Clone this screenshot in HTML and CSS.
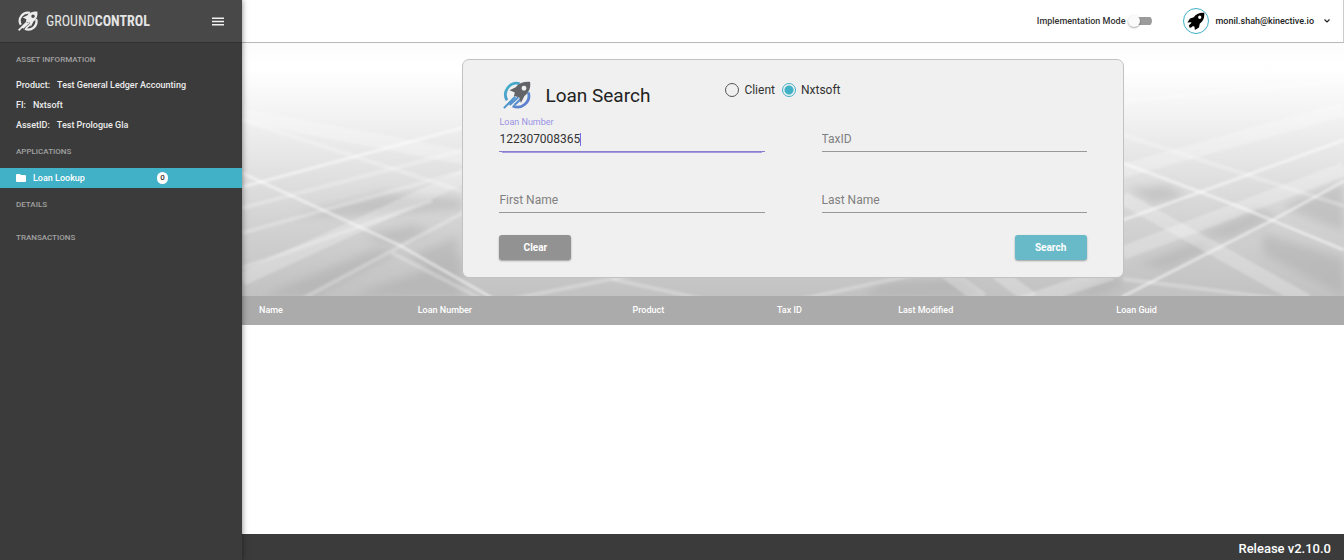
FILE: index.html
```html
<!DOCTYPE html>
<html lang="en">

<head>
    <meta charset="UTF-8">
    <meta name="viewport" content="width=device-width, initial-scale=1.0">
    <title>GroundControl - Loan Search</title>
    <link rel="stylesheet" href="styles.css">
</head>

<body>
    <div class="app">
        <aside class="sidebar">
            <div class="brand">
                <svg class="brandIcon" viewBox="0 0 32 32">
                    <g fill="none" stroke="#ececec" stroke-width="3.600">
                        <path d="M19 3A13 13 0 0 0 4.500 22" />
                        <path d="M29 13A13 13 0 0 1 11 28.500" />
                        <path d="M1 31L14 18M7.500 27.500l10-9M13 27.500l7-6.500" stroke-width="2.800" />
                    </g>
                    <path fill="#ececec" fill-rule="evenodd" d="M31 1C24 .5 18 2.500 14.500 7L7.500 10.500l6 2.500-1 4 6 1.500 2 6.500 4-8C29.500 13 32 8 31 1zM24 5.500a2.800 2.800 0 1 1 0 5.600 2.800 2.800 0 0 1 0-5.600z" />
                </svg>
                <span class="brandName">GROUND<b>CONTROL</b></span>
                <button class="menuBtn" type="button" aria-label="Menu">
                    <svg viewBox="0 0 13 9"><path d="M0 1h13M0 4.500h13M0 8h13" stroke="#f0f0f0" stroke-width="1.800" /></svg>
                </button>
            </div>
            <h2 class="sideTitle">ASSET INFORMATION</h2>
            <dl class="assetInfo">
                <div><dt>Product:</dt><dd>Test General Ledger Accounting</dd></div>
                <div><dt>FI:</dt><dd>Nxtsoft</dd></div>
                <div><dt>AssetID:</dt><dd>Test Prologue Gla</dd></div>
            </dl>
            <h2 class="sideTitle">APPLICATIONS</h2>
            <a class="sideLink" href="#">
                <svg viewBox="0 0 20 16"><path fill="#fff" d="M2 0h6l2 2h8a2 2 0 0 1 2 2v10a2 2 0 0 1-2 2H2a2 2 0 0 1-2-2V2a2 2 0 0 1 2-2z" /></svg>
                <span>Loan Lookup</span>
                <span class="count">0</span>
            </a>
            <h2 class="sideTitle">DETAILS</h2>
            <h2 class="sideTitle">TRANSACTIONS</h2>
        </aside>

        <div class="main">
            <header class="topbar">
                <label class="mode">Implementation Mode<input class="switch" type="checkbox"></label>
                <button class="user" type="button">
                    <span class="avatar">
                        <svg viewBox="0 0 24 24">
                            <path fill="#000" fill-rule="evenodd" d="M23 1C16.500.5 12 2.500 9 7L4 8.500.5 14l5.500-.5-.8 1.800-2.700 2.200.5 2 .5 1.500 2-.5 2.500-2 2 1 .5 4.500 5.500-3.500 1-5C22 12 23.500 7 23 1zM17 4.800a2.200 2.200 0 1 1 0 4.400 2.200 2.200 0 0 1 0-4.400z" />
                        </svg>
                    </span>
                    monil.shah@kinective.io
                    <svg class="chevron" viewBox="0 0 6 4"><path d="M.5.5L3 3 5.500.5" fill="none" stroke="#222" stroke-width="1.200" /></svg>
                </button>
            </header>

            <section class="hero">
                <svg class="heroBg" viewBox="0 0 1102 253" preserveAspectRatio="none">
                    <defs>
                        <linearGradient id="floor" x1="0" y1="0" x2="0" y2="1">
                            <stop offset="0" stop-color="#fcfcfc" />
                            <stop offset=".1" stop-color="#fff" />
                            <stop offset=".25" stop-color="#f5f5f5" />
                            <stop offset=".45" stop-color="#e6e6e6" />
                            <stop offset=".7" stop-color="#d3d3d3" />
                            <stop offset="1" stop-color="#c2c2c2" />
                        </linearGradient>
                        <filter id="soft"><feGaussianBlur stdDeviation="1.200" /></filter>
                        <filter id="softer" x="-10%" y="-10%" width="120%" height="120%"><feGaussianBlur stdDeviation="5" /></filter>
                    </defs>
                    <rect width="1102" height="253" fill="url(#floor)" />
                    <!-- shaded streaks -->
                    <g fill="#a6a6a6" fill-opacity=".4" filter="url(#softer)">
                        <path d="M120 194l50-12 20 6-34 14z" />
                        <path d="M165 214l50-20v22l-26 10z" />
                        <path d="M20 253l115-48 22 4-84 44z" />
                        <path d="M50 174l90-24 80 6v10l-90 6z" />
                        <path d="M110 253l110-40v40z" />
                        <path d="M895 222l60-24 20 6-50 22z" />
                        <path d="M955 192l60-26 22 8-50 22z" />
                        <path d="M885 146l40-4 20 12-34 6z" />
                        <path d="M820 253l50-20 16 8-30 12z" />
                        <path d="M1020 190l82 26v36l-80-40z" />
                        <path d="M1040 164l62-26v50z" />
                        <path d="M640 240l80-6 20 20h-120z" />
                    </g>
                    <!-- light bands -->
                    <g fill="none" stroke="#fff" stroke-opacity=".25" stroke-width="14" filter="url(#soft)">
                        <path d="M881 210L1102 126" />
                        <path d="M881 155L1065 258" />
                        <path d="M705 230L740 256" />
                        <path d="M755 230L790 256" />
                        <path d="M780 260L870 230" />
                        <path d="M0 72L230 116" />
                        <path d="M881 128L1102 66" />
                        <path d="M0 236L230 130" />
                    </g>
                    <g fill="none" stroke="#fff" stroke-opacity=".25" stroke-width="4" filter="url(#soft)">
                        <path d="M0 190L230 126" />
                        <path d="M0 165L230 105" />
                        <path d="M0 225L190 158" />
                        <path d="M60 256L230 165" />
                        <path d="M0 77L220 148" />
                        <path d="M881 92L1102 163" />
                        <path d="M150 210L240 256" />
                        <path d="M270 256L400 230" />
                        <path d="M370 236L460 256" />
                        <path d="M560 256L680 230" />
                        <path d="M860 60L1102 38" />
                        <path d="M881 236L1040 256" />
                    </g>
                    <g fill="none" stroke="#fff" stroke-opacity=".5" stroke-width="3" filter="url(#soft)">
                        <path d="M0 144L230 82" />
                        <path d="M0 130L157 202L252 256" />
                        <path d="M881 120L998 164L1102 207" />
                        <path d="M880 254L1031 177L1102 138" />
                        <path d="M881 177L1102 97" />
                    </g>
                </svg>

                <form class="card">
                    <div class="cardHead">
                        <svg class="cardIcon" viewBox="0 0 32 32">
                            <defs>
                                <linearGradient id="ring" gradientUnits="userSpaceOnUse" x1="4" y1="4" x2="28" y2="28">
                                    <stop offset="0" stop-color="#42b1c8" />
                                    <stop offset="1" stop-color="#6079d0" />
                                </linearGradient>
                            </defs>
                            <g fill="none" stroke="url(#ring)" stroke-width="3.200">
                                <path d="M19 3A13 13 0 0 0 4.500 22" />
                                <path d="M29 13A13 13 0 0 1 11 28.500" />
                                <path d="M1 31L14 18M7.500 27.500l10-9M13 27.500l7-6.500" stroke-width="2.400" />
                            </g>
                            <path fill="#626468" fill-rule="evenodd" d="M31 1C24 .5 18 2.500 14.500 7L7.500 10.500l6 2.500-1 4 6 1.500 2 6.500 4-8C29.500 13 32 8 31 1zM24 5.500a2.800 2.800 0 1 1 0 5.600 2.800 2.800 0 0 1 0-5.600z" />
                        </svg>
                        <h1>Loan Search</h1>
                        <div class="source">
                            <label><input type="radio" name="source" value="client">Client</label>
                            <label><input type="radio" name="source" value="nxtsoft" checked>Nxtsoft</label>
                        </div>
                    </div>
                    <div class="fields">
                        <div class="field active">
                            <label for="loanNumber">Loan Number</label>
                            <input id="loanNumber" type="text" value="122307008365">
                            <i class="caret"></i>
                        </div>
                        <div class="field">
                            <input type="text" placeholder="TaxID" aria-label="TaxID">
                        </div>
                        <div class="field">
                            <input type="text" placeholder="First Name" aria-label="First Name">
                        </div>
                        <div class="field">
                            <input type="text" placeholder="Last Name" aria-label="Last Name">
                        </div>
                    </div>
                    <div class="actions">
                        <button class="btn" type="reset">Clear</button>
                        <button class="btn primary" type="button">Search</button>
                    </div>
                </form>
            </section>

            <table class="results">
                <thead>
                    <tr>
                        <th class="colName">Name</th>
                        <th class="colNumber">Loan Number</th>
                        <th class="colProduct">Product</th>
                        <th class="colTax">Tax ID</th>
                        <th class="colModified">Last Modified</th>
                        <th>Loan Guid</th>
                    </tr>
                </thead>
            </table>

            <footer class="footer">Release v2.10.0</footer>
        </div>
    </div>
</body>

</html>
```
FILE: styles.css
```css
* {
    box-sizing: border-box;
    margin: 0;
    padding: 0;
}

body {
    font-family: Roboto, "Liberation Sans", sans-serif;
    font-size: 12px;
    color: #333;
    background-color: #fff;
}

button,
input {
    font-family: inherit;
}

button {
    border: none;
    background: none;
    cursor: pointer;
}

.app {
    display: flex;
    min-height: 100vh;
}

/* sidebar */
.sidebar {
    flex: none;
    width: 242px;
    background-color: #3b3b3b;
    color: #ececec;
    font-size: 9px;
    font-weight: 500;
    box-shadow: 0 0 6px rgba(0, 0, 0, .5);
    z-index: 1;
}

.brand {
    display: flex;
    align-items: center;
    height: 43px;
    padding: 0 18px;
    background-color: #484848;
    border-bottom: 1px solid #303030;
}

.brandIcon {
    width: 20px;
    height: 20px;
    margin-right: 8px;
}

.brandName {
    font-family: "Liberation Sans Narrow", "Roboto Condensed", Roboto, sans-serif;
    font-size: 14px;
    font-weight: 400;
    color: #e4e4e4;
}

.menuBtn {
    display: flex;
    margin-left: auto;
}

.menuBtn svg {
    width: 12px;
    height: 9px;
}

.sideTitle {
    margin-top: 1px;
    padding: 0 16px;
    font-size: 8px;
    font-weight: 500;
    line-height: 32px;
    color: #a2a2a2;
}

.assetInfo {
    margin-top: -1px;
}

.assetInfo div {
    display: flex;
    gap: 7px;
    padding: 0 16px;
    line-height: 20px;
}

.sideLink {
    display: flex;
    align-items: center;
    height: 20px;
    padding: 0 16px;
    color: #fff;
    text-decoration: none;
    background-color: #40b1c7;
}

.sideLink svg {
    width: 10px;
    height: 8px;
    margin-right: 7px;
}

.count {
    width: 11px;
    margin-left: 72px;
    border-radius: 6px;
    background-color: #fff;
    color: #333;
    font-size: 8px;
    line-height: 12px;
    text-align: center;
}

/* main column */
.main {
    display: flex;
    flex: 1;
    flex-direction: column;
    min-width: 0;
}

.topbar {
    display: flex;
    align-items: center;
    justify-content: flex-end;
    gap: 31px;
    height: 43px;
    padding: 0 13px 1px 0;
    border-right: 1px solid #ccc;
    border-bottom: 1px solid #b8b8b8;
    font-size: 9px;
    font-weight: 500;
}

.mode {
    display: flex;
    align-items: center;
    gap: 3px;
}

.switch {
    display: flex;
    align-items: center;
    appearance: none;
    width: 24px;
    height: 12px;
    background: linear-gradient(#9b9b9b, #9b9b9b) right center / 20px 8px no-repeat;
    border-radius: 6px;
}

.switch::before {
    content: "";
    width: 12px;
    height: 12px;
    border-radius: 50%;
    background-color: #fafafa;
    box-shadow: 0 1px 2px rgba(0, 0, 0, .35);
}

.user {
    display: flex;
    align-items: center;
    gap: 6px;
    color: #222;
    font-size: 9px;
    font-weight: 500;
}

.avatar {
    display: flex;
    align-items: center;
    justify-content: center;
    width: 26px;
    height: 26px;
    border: 1px solid #40b1c7;
    border-radius: 50%;
}

.avatar svg {
    width: 18px;
    height: 18px;
}

.chevron {
    width: 6px;
    height: 4px;
    margin-left: 4px;
}

.hero {
    position: relative;
    padding: 16px 0 18px;
}

.heroBg {
    position: absolute;
    inset: 0;
    width: 100%;
    height: 100%;
}

.card {
    position: relative;
    width: 60%;
    margin: 0 auto;
    padding: 19px 36px 17px;
    border: 1px solid #c2c2c2;
    border-radius: 7px;
    background-color: #f0f0f0;
}

.cardHead {
    display: flex;
    align-items: center;
    height: 32px;
    padding-left: 4px;
}

.cardIcon {
    width: 28px;
    height: 28px;
    margin-right: 14px;
}

.cardHead h1 {
    font-size: 19px;
    font-weight: 400;
    color: #222;
}

.source {
    display: flex;
    gap: 7px;
    margin: 0 0 10px 75px;
}

.source label {
    display: flex;
    align-items: center;
    gap: 5px;
}

.source input {
    appearance: none;
    width: 14px;
    height: 14px;
    border: 1px solid #555;
    border-radius: 50%;
}

.source input:checked {
    border-color: #40b1c7;
    background: radial-gradient(circle, #40b1c7 4px, transparent 5px);
}

.fields {
    display: grid;
    grid-template-columns: 1fr 1fr;
    gap: 20px 57px;
}

.field {
    position: relative;
    display: flex;
    flex-direction: column;
    justify-content: flex-end;
    height: 41px;
}

.field input {
    width: 100%;
    height: 24px;
    padding-bottom: 2px;
    border: none;
    border-bottom: 1px solid #999;
    outline: none;
    background: none;
    color: #333;
    font-size: 12px;
}

.field input::placeholder {
    color: #808080;
}

.field label {
    color: #9a92e4;
    font-size: 9px;
    line-height: 12px;
}

.field.active input {
    border-bottom-color: #8880cc;
}

.field.active::after {
    content: "";
    position: absolute;
    top: 100%;
    left: 3px;
    right: 3px;
    height: 1px;
    background-color: #a29bdf;
}

.caret {
    position: absolute;
    bottom: 6px;
    left: 81px;
    width: 1px;
    height: 13px;
    background-color: #7a6fe0;
}

.actions {
    display: flex;
    justify-content: space-between;
    margin-top: 22px;
}

.btn {
    width: 72px;
    height: 25px;
    border-radius: 3px;
    background-color: #929292;
    color: #fff;
    font-size: 10px;
    font-weight: 700;
    box-shadow: 0 1px 2px rgba(0, 0, 0, .35);
}

.btn.primary {
    background-color: #69bac9;
}

.results {
    width: 100%;
    table-layout: fixed;
    border-collapse: collapse;
    background-color: #ababab;
}

.results th {
    height: 29px;
    padding: 0 0 2px 17px;
    color: #fff;
    font-size: 9px;
    font-weight: 500;
    text-align: left;
}

.colName { width: 14.4%; }
.colNumber { width: 19.5%; }
.colProduct { width: 13.1%; }
.colTax { width: 11%; }
.colModified { width: 19.8%; }

.footer {
    margin-top: auto;
    padding: 3px 13px 0 0;
    background-color: #3b3b3b;
    color: #fff;
    font-size: 13px;
    font-weight: 500;
    line-height: 23px;
    text-align: right;
}
```
